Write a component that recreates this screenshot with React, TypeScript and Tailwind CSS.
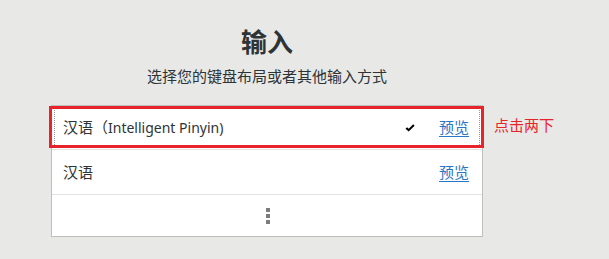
import React from "react";

const font = { fontFamily: '"Noto Sans", "Noto Sans CJK SC", sans-serif' };

export default function App() {
  return (
    <div
      className="relative w-[609px] h-[259px] bg-[#e8e8e7] text-[#2e3436] overflow-hidden"
      style={font}
    >
      <div className="ml-[51px] w-[432px] pt-[26px] flex flex-col items-center">
        <div className="text-[26px] leading-[32px] font-bold">输入</div>
        <div className="mt-[9px] text-[15px] leading-[18px]">选择您的键盘布局或者其他输入方式</div>
        <div className="mt-[20px] w-full bg-white border border-[#bfbfbc] flex flex-col">
          <div className="h-[44px] flex items-center pl-[11px] pr-[13px] border-b border-[#e3e3e1] relative">
            <div className="absolute inset-[2px] border border-dotted border-[#9a9a9a]" />
            <span className="text-[15px]">
              汉语（<span className="text-[14px]">Intelligent Pinyin)</span>
            </span>
            <svg className="ml-auto mr-[24px]" width="10" height="8" viewBox="0 0 10 8">
              <path d="M0.5 4.7 L2.1 3.2 L3.7 4.7 L8.2 0.3 L9.6 1.7 L3.7 7.6 Z" fill="#000" />
            </svg>
            <span className="text-[15px] text-[#2a76c6] underline underline-offset-[3px]">预览</span>
          </div>
          <div className="h-[45px] flex items-center pl-[11px] pr-[13px] border-b border-[#e3e3e1]">
            <span className="text-[15px]">汉语</span>
            <span className="ml-auto text-[15px] text-[#2a76c6] underline underline-offset-[3px]">预览</span>
          </div>
          <div className="h-[41px] flex items-center justify-center">
            <div className="flex flex-col gap-[2px] ml-[1px]">
              <div className="w-[4px] h-[4px] bg-[#7c7c7c]" />
              <div className="w-[4px] h-[4px] bg-[#7c7c7c]" />
              <div className="w-[4px] h-[4px] bg-[#7c7c7c]" />
            </div>
          </div>
        </div>
      </div>
      <div className="absolute left-[49px] top-[106px] w-[435px] h-[42px] border-[3px] border-[#e8242b]" />
      <div className="absolute left-[494px] top-[116px] text-[15px] leading-[18px] text-[#e8242b]">点击两下</div>
    </div>
  );
}
